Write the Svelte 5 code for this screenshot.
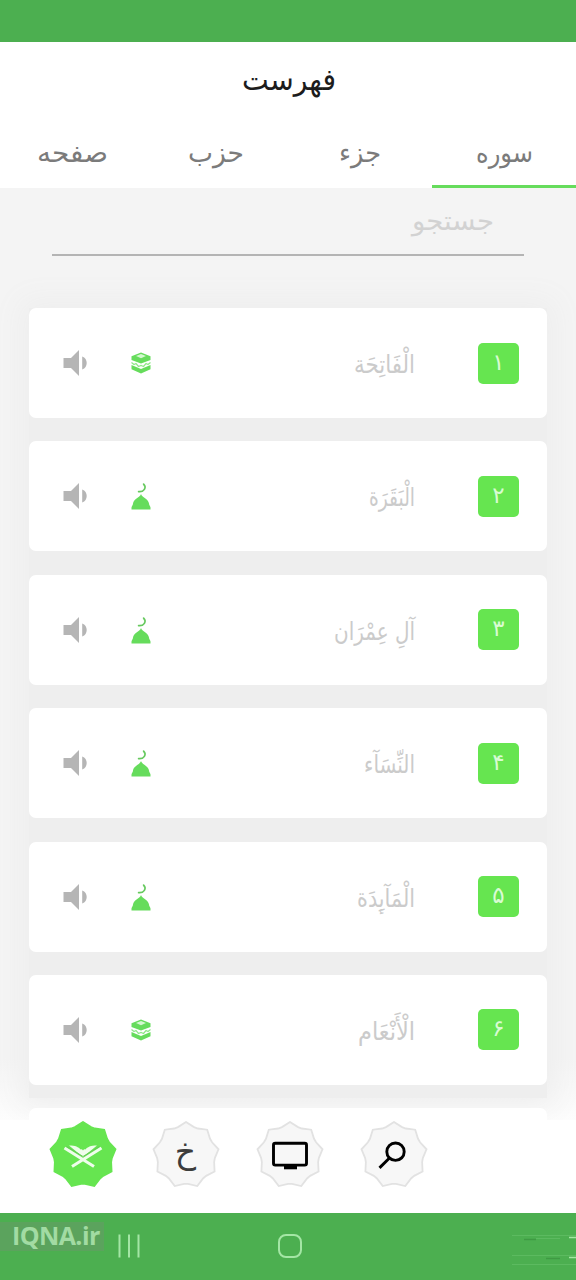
<script lang="ts">
    const tabs = [
        { label: 'صفحه', width: 71 },
        { label: 'حزب', width: 56 },
        { label: 'جزء', width: 42 },
        { label: 'سوره', width: 57 },
    ]
    let active = $state(3)

    const surahs = [
        { num: '۱', name: 'الْفَاتِحَة', width: 61, place: 'kaaba' },
        { num: '۲', name: 'الْبَقَرَة', width: 46, place: 'mosque' },
        { num: '۳', name: 'آلِ عِمْرَان', width: 81, place: 'mosque' },
        { num: '۴', name: 'النِّسَآء', width: 51, place: 'mosque' },
        { num: '۵', name: 'الْمَآىِٕدَة', width: 58, place: 'mosque' },
        { num: '۶', name: 'الْأَنْعَام', width: 57, place: 'kaaba' },
    ]

    const nav = ['quran', 'khatm', 'screen', 'search']

    // nine pointed star with slightly hollow sides
    function star(r: number, inner: number) {
        const at = (radius: number, deg: number) => {
            const a = (deg - 90) * Math.PI / 180
            return `${(34 + radius * Math.cos(a)).toFixed(2)} ${(34 + radius * Math.sin(a)).toFixed(2)}`
        }
        let d = `M${at(r, 0)}`
        for (let i = 0; i < 9; i++) {
            d += `L${at(inner, i * 40 + 16)}L${at(inner, i * 40 + 24)}L${at(r, i * 40 + 40)}`
        }
        return d + 'Z'
    }
</script>

{#snippet word(text: string, width: number, cls: string)}
    <svg class="word {cls}" {width} height="40">
        <text x={width} y="28" direction="rtl" textLength={width} lengthAdjust="spacingAndGlyphs">{text}</text>
    </svg>
{/snippet}

<div class="phone">
    <div class="status"></div>

    <header>
        <h1>{@render word('فهرست', 94, 'title')}</h1>
        <div class="tabs">
            {#each tabs as tab, i}
                <button class:active={active === i} onclick={() => active = i}>
                    {@render word(tab.label, tab.width, 'tab')}
                </button>
            {/each}
        </div>
    </header>

    <main>
        <div class="search">{@render word('جستجو', 82, 'hint')}</div>

        <div class="list">
            {#each surahs as s}
                <div class="card">
                    <svg class="speaker" width="26" height="28" viewBox="0 0 26 28">
                        <path d="M0.5 9h7.5L16 1v26L8 19H0.5zM19.200 7.500c6 1.500 6 11.500 0 13z" />
                    </svg>
                    <svg class="place" width="20" height="28" viewBox="0 0 20 28">
                        {#if s.place === 'kaaba'}
                            <path d="M10 3.500l9.500 3.700v3.800L10 14.500 0.500 11V7.200z" />
                            <path d="M0.500 16l9.500 4 9.500-4v4.200L10 24.500 0.500 20.200z" />
                            <path class="lid" d="M10 5l5 2-5 2.200L5 7z" />
                            <path class="deco" d="M0.500 13.500l2.500 2 2-1 2.500 3 2.500-1 2.500 1 2.500-3 2 1 2.500-2" />
                        {:else}
                            <path class="moon" d="M12.600 2.200c3.200 3.200.6 8-5 7.400" />
                            <path d="M10 12c.8 3.400 7.400 4.800 8 9.600.2 1.800 1 2.400 1.500 3.800V27.500H.5v-2.100c.5-1.400 1.300-2 1.500-3.800C2.600 16.800 9.200 15.400 10 12z" />
                        {/if}
                    </svg>
                    <span class="name">{@render word(s.name, s.width, 'surah')}</span>
                    <span class="num">{s.num}</span>
                </div>
            {/each}
            <div class="card"></div>
        </div>
    </main>

    <nav>
        {#each nav as item, i}
            <svg class="badge" class:on={i === 0} width="68" height="68" viewBox="0 0 68 68">
                <path class="star" d={star(33, 29)} />
                {#if item === 'quran'}
                    <path class="page" d="M20 24.500c6.500 0 9.500 1.500 11.500 4 .8-.6 1.700-.2 2.500 1 .8-1.200 1.700-1.600 2.500-1 2-2.500 5-4 11.500-4L34 36z" />
                    <path class="stand" d="M15.500 27L45 45.500M52.500 27L23 45.500" />
                    <path class="crease" d="M17.500 25.500L34 35.500 50.500 25.500" />
                {:else if item === 'khatm'}
                    <text x="33.500" y="42">خ</text>
                {:else if item === 'screen'}
                    <rect x="17.500" y="22.300" width="33" height="21.800" rx="1.800" />
                    <path class="foot" d="M28 44h13v4.300H28z" />
                {:else}
                    <circle cx="35.500" cy="30.700" r="8.700" />
                    <path class="handle" d="M29.500 37L19.500 46.900" />
                {/if}
            </svg>
        {/each}
    </nav>

    <footer>
        <div class="mark"><b>IQNA.ir</b></div>
        <svg class="recents" width="24" height="26" viewBox="0 0 24 26">
            <path d="M2.500 1.500v23M12 1.500v23M21.500 1.500v23" />
        </svg>
        <svg class="home" width="26" height="26" viewBox="0 0 26 26">
            <rect x="2" y="2" width="22" height="22" rx="7" />
        </svg>
        <svg class="noise" width="64" height="36" viewBox="0 0 64 36">
            <path class="faint" d="M0 4.500h64M0 24.500h64M0 33.500h64M24 7.500h24" />
            <path class="dim" d="M12 8.500h12M34 27.500h14" />
            <path d="M57 6.500h7M57 26.500h7" />
        </svg>
    </footer>
</div>

<style>
    :global(body) { margin: 0; background: #fff; }

    .phone {
        width: 576px;
        height: 1280px;
        display: flex;
        flex-direction: column;
        overflow: hidden;
        font-family: "DejaVu Sans", sans-serif;
    }

    .status { height: 42px; background: #4caf50; flex: none; }

    header { height: 146px; flex: none; background: #fff; }
    h1 {
        margin: 0;
        height: 79px;
        padding: 20px 0 0 2px;
        box-sizing: border-box;
        display: flex;
        justify-content: center;
        font-weight: normal;
    }
    .tabs { display: grid; grid-template-columns: repeat(4, 1fr); }
    .tabs button {
        height: 67px;
        padding: 13px 0 0;
        border: 0;
        border-bottom: 3px solid transparent;
        background: none;
        display: flex;
        justify-content: center;
        align-items: flex-start;
    }
    .tabs button.active { border-color: #66dc5c; }

    .word { display: block; overflow: visible; font-family: "DejaVu Sans", sans-serif; }
    .title { font-size: 30px; fill: #1c1c1c; }
    .tab { font-size: 27px; fill: #7b7b7b; }
    .hint { font-size: 27px; fill: #d2d2d2; }
    .surah { font-size: 25px; fill: #cbcbcb; }

    main {
        height: 932px;
        flex: none;
        overflow: hidden;
        background: linear-gradient(#f4f4f4 870px, #fdfdfd 932px);
    }
    .search {
        margin: 0 52px;
        height: 68px;
        padding: 14px 30px 0 0;
        box-sizing: border-box;
        border-bottom: 2px solid #b4b4b4;
        display: flex;
        justify-content: flex-end;
    }
    .list {
        margin: 52px 29px 0;
        height: 790px;
        display: flex;
        flex-direction: column;
        gap: 23.400px;
        background: #eee;
        box-shadow: 0 0 28px 8px #eee;
    }
    .card {
        height: 110px;
        flex: none;
        box-sizing: border-box;
        padding: 0 28px 0 34px;
        display: flex;
        align-items: center;
        background: #fff;
        border-radius: 7px;
    }
    .speaker { fill: #b5b5b5; }
    .place { margin-left: 42px; fill: #66dc5c; }
    .lid { fill: #d4f8d0; }
    .deco { fill: none; stroke: #8ee887; stroke-width: 1.200; }
    .moon { fill: none; stroke: #66c95e; stroke-width: 1.700; stroke-linecap: round; }
    .name { margin-left: auto; height: 40px; padding-top: 4px; }
    .num {
        margin-left: 63px;
        width: 41px;
        height: 41px;
        line-height: 39px;
        border-radius: 5px;
        background: #66e550;
        color: #d9fbd3;
        font-size: 23px;
        text-align: center;
    }

    nav {
        height: 93px;
        flex: none;
        box-sizing: border-box;
        padding: 1px 0 0 48.500px;
        display: flex;
        gap: 35.700px;
        background: #fff;
    }
    .star { fill: #f7f7f7; stroke: #e2e2e2; stroke-width: 1.800; }
    .on .star { fill: #66e550; stroke: #66e550; }
    .badge text { font-size: 33px; fill: #3c3c3c; text-anchor: middle; }
    .badge rect, .badge circle, .handle { fill: none; stroke: #000; stroke-width: 2.900; }
    .foot { fill: #000; }
    .page { fill: #effdec; }
    .stand { fill: none; stroke: #effdec; stroke-width: 3; }
    .crease { fill: none; stroke: #66c958; stroke-width: 1; }

    footer {
        flex: 1;
        display: flex;
        align-items: flex-start;
        background: #4caf50;
    }
    .mark {
        width: 104px;
        height: 29px;
        margin-top: 9px;
        box-sizing: border-box;
        padding-left: 12px;
        background: #5ba35d;
        color: #a2dba3;
        font: 25px/27px "Open Sans", sans-serif;
        letter-spacing: -0.600px;
    }
    .recents { margin: 20px 0 0 13px; }
    .home { margin: 20px 0 0 136px; }
    .noise { margin: 18px 0 0 auto; }
    .recents path, .home rect { fill: none; stroke: #a4e6a5; stroke-width: 2; }
    .noise path { fill: none; stroke: #a4e6a5; stroke-width: 1.500; }
    .noise .faint { stroke: #5cba60; stroke-width: 1; }
    .noise .dim { stroke: #3f9a43; }
</style>
